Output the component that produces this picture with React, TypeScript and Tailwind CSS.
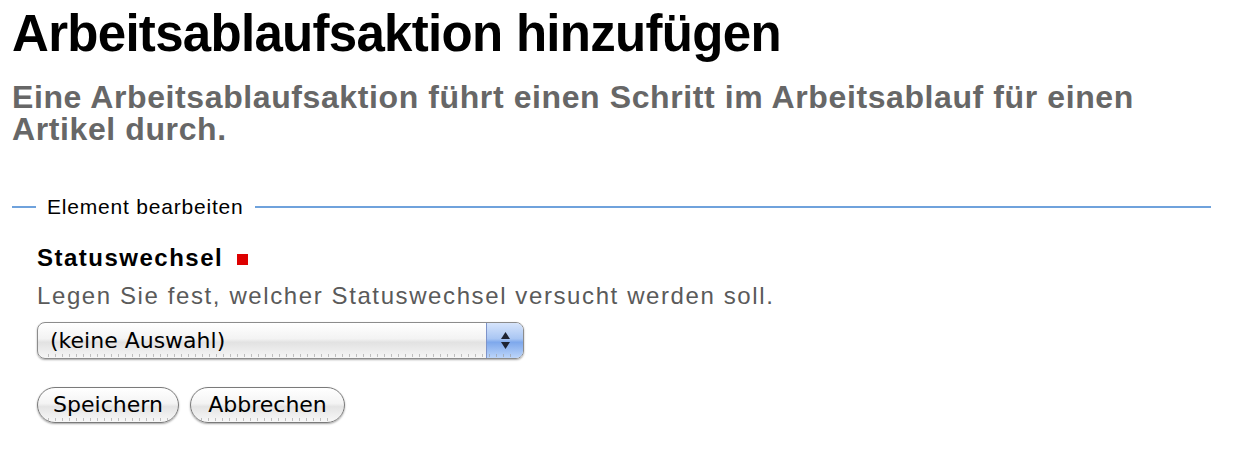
import React from "react";

const sans = "font-['Liberation_Sans',Arial,sans-serif]";
const aqua = "font-['DejaVu_Sans','Liberation_Sans',sans-serif]";

function Ticks() {
  return (
    <div className="pointer-events-none absolute bottom-[1px] left-[10px] right-[10px] h-[3px] bg-[repeating-linear-gradient(90deg,#9a9a9a_0px,#9a9a9a_1px,transparent_1px,transparent_7px)] opacity-60" />
  );
}

export default function App() {
  return (
    <div className={`${sans} min-h-[449px] w-[1237px] bg-white pl-[12px]`}>
      <h1 className="mt-[8px] text-[51px] leading-[51px] font-bold tracking-[-0.7px] text-black">
        Arbeitsablaufsaktion hinzufügen
      </h1>
      <p className="mt-[22px] max-w-[1190px] text-[32px] leading-[32px] font-bold tracking-[0.6px] text-[#676767]">
        Eine Arbeitsablaufsaktion führt einen Schritt im Arbeitsablauf für einen Artikel durch.
      </p>

      <div className="mt-[50px] w-[1199px]">
        <div className="flex items-center">
          <div className="h-[2px] w-[24px] bg-[#6fa2dc]" />
          <span className="px-[11px] text-[21px] leading-[24px] tracking-[0.8px] text-black">
            Element bearbeiten
          </span>
          <div className="h-[2px] flex-1 bg-[#6fa2dc]" />
        </div>

        <div className="pl-[25px]">
          <div className="mt-[25px] flex items-center">
            <span className="text-[24px] leading-[28px] font-bold tracking-[1.5px] text-black">
              Statuswechsel
            </span>
            <span className="ml-[14px] mt-[3px] h-[11px] w-[11px] bg-[#dd0000]" />
          </div>
          <p className="mt-[10px] text-[24px] leading-[28px] tracking-[1.6px] text-[#5a5a5a]">
            Legen Sie fest, welcher Statuswechsel versucht werden soll.
          </p>

          <div
            className={`${aqua} relative mt-[12px] flex h-[37px] w-[487px] items-stretch overflow-hidden rounded-[8px] border border-[#8c8c8c] bg-[linear-gradient(#ffffff,#f3f3f3_45%,#e2e2e2_55%,#f6f6f6)] shadow-[0_1px_2px_rgba(0,0,0,0.35)]`}
          >
            <div className="flex flex-1 items-center pl-[12px] text-[22px] leading-none text-black">
              (keine Auswahl)
            </div>
            <div className="flex w-[37px] flex-col items-center justify-center gap-[3px] border-l border-[#7d93c9] bg-[linear-gradient(#d6e4fb,#a9c6f3_45%,#7ea8ec_55%,#bcd5fa)]">
              <svg width="9" height="7" viewBox="0 0 9 7">
                <path d="M4.5 0 L9 7 L0 7 Z" fill="#1e2433" />
              </svg>
              <svg width="9" height="7" viewBox="0 0 9 7">
                <path d="M0 0 L9 0 L4.5 7 Z" fill="#1e2433" />
              </svg>
            </div>
            <Ticks />
          </div>

          <div className={`${aqua} mt-[28px] flex gap-[11px]`}>
            <button className="relative h-[36px] w-[142px] rounded-full border border-[#7a7a7a] bg-[linear-gradient(#ffffff,#f4f4f4_45%,#e4e4e4_55%,#f8f8f8)] text-[22px] leading-none text-black shadow-[0_1px_2px_rgba(0,0,0,0.35)]">
              Speichern
              <Ticks />
            </button>
            <button className="relative h-[36px] w-[155px] rounded-full border border-[#7a7a7a] bg-[linear-gradient(#ffffff,#f4f4f4_45%,#e4e4e4_55%,#f8f8f8)] text-[22px] leading-none text-black shadow-[0_1px_2px_rgba(0,0,0,0.35)]">
              Abbrechen
              <Ticks />
            </button>
          </div>
        </div>
      </div>
    </div>
  );
}
